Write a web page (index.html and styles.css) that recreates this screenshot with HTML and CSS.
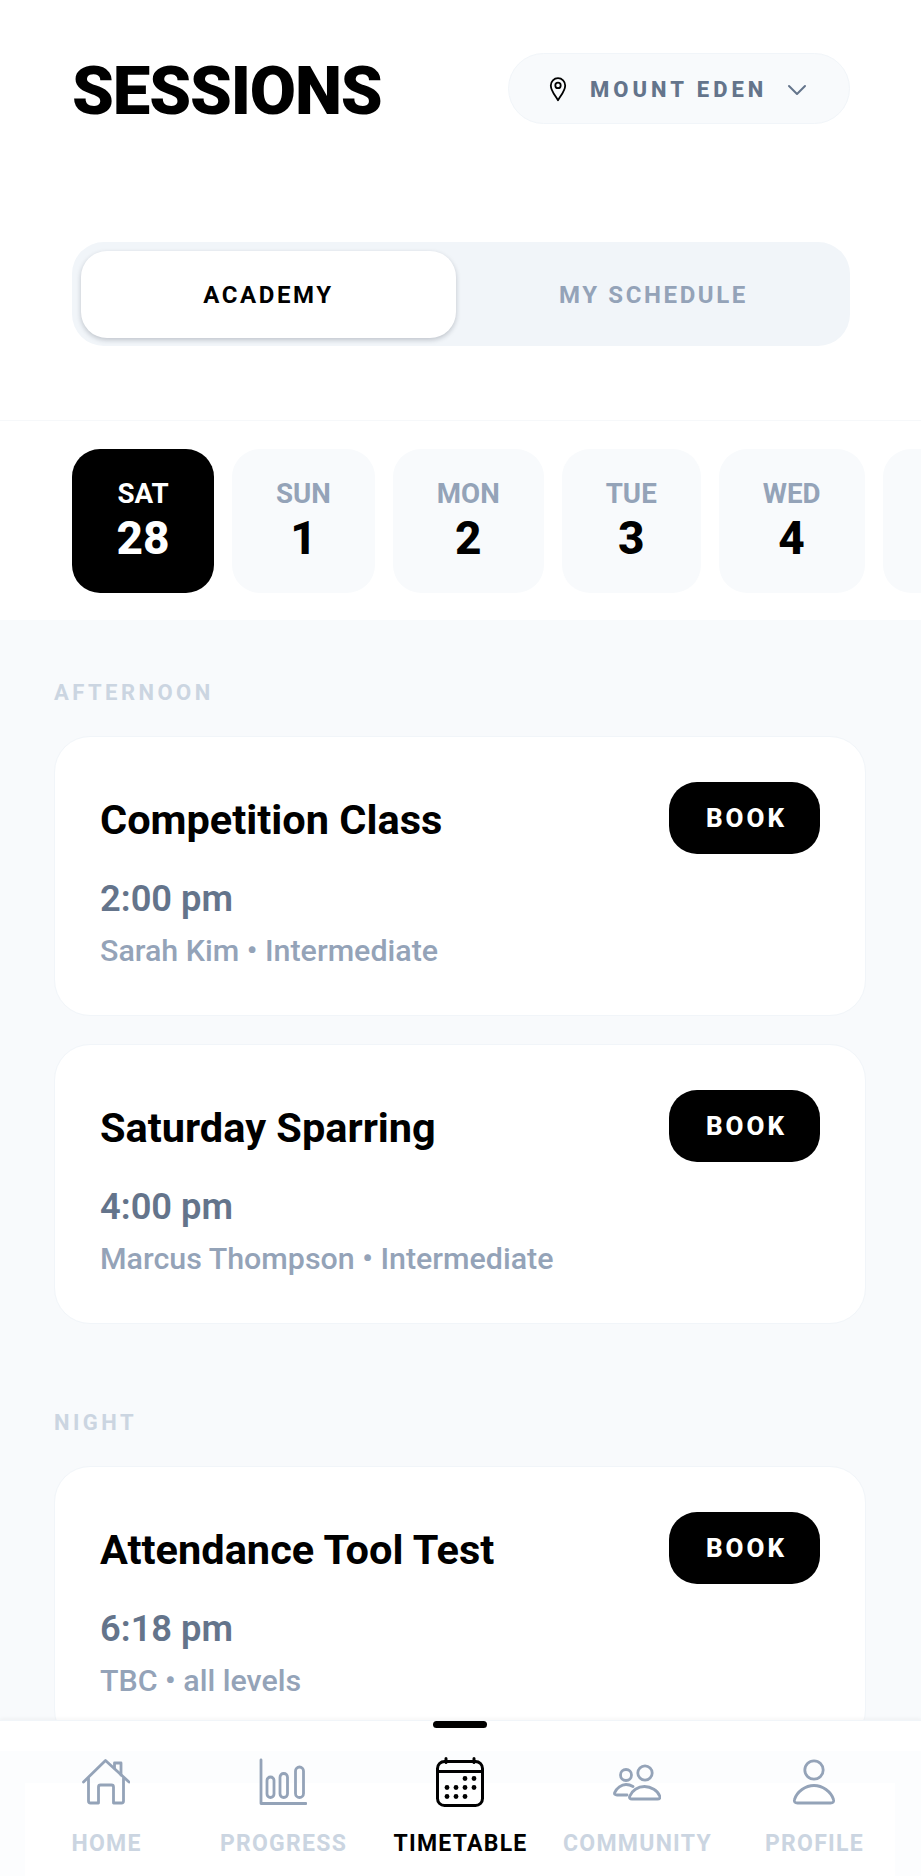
FILE: index.html
```html
<!DOCTYPE html>
<html lang="en">
<head>
<meta charset="utf-8">
<title>Sessions</title>
<link rel="stylesheet" href="styles.css">
</head>
<body>
<div class="app">
  <header class="header">
    <h1 class="title">SESSIONS</h1>
    <button class="location">
      <svg class="pin" viewBox="0 0 20 28" fill="none" stroke="#000" stroke-width="2"><path d="M10 26.500C6 20 2 15.500 2 10a8 8 0 0 1 16 0C18 15.500 14 20 10 26.500Z" stroke-linejoin="round"/><circle cx="10" cy="10" r="3"/></svg>
      <span>MOUNT EDEN</span>
      <svg class="chev" viewBox="0 0 20 12" fill="none" stroke="#64748b" stroke-width="2" stroke-linecap="round" stroke-linejoin="round"><path d="M2 2l8 8 8-8"/></svg>
    </button>
  </header>
  <div class="tabs-wrap">
    <div class="tabs">
      <div class="tab active">ACADEMY</div>
      <div class="tab">MY SCHEDULE</div>
    </div>
  </div>
  <div class="dates">
    <div class="date selected"><span class="dow">SAT</span><span class="num">28</span></div>
    <div class="date"><span class="dow">SUN</span><span class="num">1</span></div>
    <div class="date"><span class="dow">MON</span><span class="num">2</span></div>
    <div class="date"><span class="dow">TUE</span><span class="num">3</span></div>
    <div class="date"><span class="dow">WED</span><span class="num">4</span></div>
    <div class="date date-next"></div>
  </div>
  <main class="list">
    <section class="group">
      <h2 class="group-label">AFTERNOON</h2>
      <article class="card">
        <div class="card-top"><h3 class="card-title">Competition Class</h3><button class="book">BOOK</button></div>
        <p class="time">2:00 pm</p>
        <p class="meta">Sarah Kim • Intermediate</p>
      </article>
      <article class="card">
        <div class="card-top"><h3 class="card-title">Saturday Sparring</h3><button class="book">BOOK</button></div>
        <p class="time">4:00 pm</p>
        <p class="meta">Marcus Thompson • Intermediate</p>
      </article>
    </section>
    <section class="group">
      <h2 class="group-label">NIGHT</h2>
      <article class="card">
        <div class="card-top"><h3 class="card-title">Attendance Tool Test</h3><button class="book">BOOK</button></div>
        <p class="time">6:18 pm</p>
        <p class="meta">TBC • all levels</p>
      </article>
    </section>
  </main>
  <nav class="nav">
    <div class="nav-panel"></div>
    <div class="nav-handle"></div>
    <a class="nav-item">
      <svg class="nav-icon" viewBox="0 0 48 50" fill="none" stroke="#94a3b8" stroke-width="2.800" stroke-linejoin="round" stroke-linecap="round"><path d="M1.500 25 23.500 3.500 47 25"/><path d="M32.500 11V6H39v12"/><path d="M6.500 21.500V44a2 2 0 0 0 2 2h8V30a2 2 0 0 1 2-2h11a2 2 0 0 1 2 2v16h8a2 2 0 0 0 2-2V21.500"/></svg>
      <span>HOME</span>
    </a>
    <a class="nav-item">
      <svg class="nav-icon" viewBox="0 0 48 50" fill="none" stroke="#94a3b8" stroke-width="2.800" stroke-linejoin="round" stroke-linecap="round"><path d="M2 3v43.500h45"/><rect x="8" y="20" width="7" height="20.500" rx="3.500"/><rect x="21" y="16.500" width="7.500" height="24" rx="3.700"/><rect x="36.500" y="10" width="8" height="30.500" rx="4"/></svg>
      <span>PROGRESS</span>
    </a>
    <a class="nav-item current">
      <svg class="nav-icon" viewBox="0 0 48 50" fill="none" stroke="#000" stroke-width="3" stroke-linejoin="round" stroke-linecap="round"><rect x="1.500" y="4.500" width="45" height="44" rx="7"/><path d="M1.500 14.500h45M10 1.500v4M38 1.500v4"/><g fill="#000" stroke="none"><circle cx="29" cy="21.500" r="2.400"/><circle cx="38" cy="21.500" r="2.400"/><circle cx="11" cy="30.500" r="2.400"/><circle cx="20" cy="30.500" r="2.400"/><circle cx="29" cy="30.500" r="2.400"/><circle cx="38" cy="30.500" r="2.400"/><circle cx="11" cy="39.500" r="2.400"/><circle cx="20" cy="39.500" r="2.400"/><circle cx="29" cy="39.500" r="2.400"/></g></svg>
      <span>TIMETABLE</span>
    </a>
    <a class="nav-item">
      <svg class="nav-icon" viewBox="0 0 48 50" fill="none" stroke="#94a3b8" stroke-width="2.800" stroke-linejoin="round" stroke-linecap="round"><circle cx="13" cy="18" r="5.500"/><circle cx="32" cy="16" r="7.200"/><path d="M14 38H4c-2 0-3-1-2.200-2.500C3.500 31 8.500 27.500 13 27.500c2.500 0 5 .8 7 2"/><path d="M19 42c-2 0-3-1-2.300-2.800C18.800 33.500 25 29.500 31.500 29.500S44.800 33.500 46.800 39.200C47.500 41 46.500 42 44.500 42Z"/></svg>
      <span>COMMUNITY</span>
    </a>
    <a class="nav-item">
      <svg class="nav-icon" viewBox="0 0 48 50" fill="none" stroke="#94a3b8" stroke-width="2.800" stroke-linejoin="round" stroke-linecap="round"><circle cx="24" cy="13" r="9.200"/><path d="M7.500 46c-2.500 0-3.800-1.300-3-3.500C7 34.500 15.500 28.500 24 28.500S41 34.500 43.500 42.500c.8 2.200-.5 3.500-3 3.500Z"/></svg>
      <span>PROFILE</span>
    </a>
  </nav>
</div>
</body>
</html>
```

FILE: styles.css
```css
* { box-sizing: border-box; }
html, body { margin: 0; height: 100%; }
body { background: #fff; font-family: Roboto, "Liberation Sans", sans-serif; color: #000; }
h1, h2, h3, p { margin: 0; }

.app { width: 921px; height: 1876px; display: flex; flex-direction: column; overflow: hidden; }

.header { display: flex; justify-content: space-between; align-items: center; padding: 53px 71px 0 72px; height: 124px; flex: none; }
.title { font-size: 67px; font-weight: 900; line-height: 71px; letter-spacing: -1.150px; margin-top: 6px; }
.location { display: flex; align-items: center; width: 342px; height: 71px; padding: 2px 42px 0 40px; background: #f8fafc; border: 1px solid #f1f5f9; border-radius: 36px; font: 800 22px Roboto, sans-serif; letter-spacing: 4px; color: #64748b; }
.pin { width: 18px; height: 26px; flex: none; margin: -2px 23px 0 0; }
.location span { flex: 1; text-align: left; white-space: nowrap; }
.chev { width: 20px; height: 12px; flex: none; }

.tabs-wrap { flex: none; padding: 118px 71px 0 72px; height: 296px; }
.tabs { display: flex; height: 104px; padding: 9px 9px 8px; background: #f1f5f9; border-radius: 32px; }
.tab { flex: 1; display: flex; align-items: center; justify-content: center; padding-top: 1px; padding-left: 10px; border-radius: 26px; font-size: 24px; font-weight: 700; letter-spacing: 2.600px; color: #94a3b8; }
.tab.active { flex: none; width: 375px; padding-left: 0; background: #fff; color: #000; box-shadow: 0 2px 5px rgba(15, 23, 42, .22); }

.dates { flex: none; display: flex; gap: 18px; height: 200px; padding: 28px 0 0 72px; border-top: 1px solid #f6f8fa; overflow: hidden; }
.date { flex: none; height: 144px; padding: 30px 44px 0; display: flex; flex-direction: column; align-items: center; background: #f8fafc; border-radius: 28px; }
.date.selected { padding: 30px 0 0; width: 142px; background: #000; color: #fff; }
.date-next { width: 100px; }
.dow { font-size: 27.700px; line-height: 30px; font-weight: 700; color: #94a3b8; }
.selected .dow { color: #fff; }
.num { font-size: 46px; line-height: 50px; font-weight: 800; margin-top: 4px; }

.list { flex: 1; min-height: 0; overflow: hidden; padding: 62px 55px 0 54px; background: #f8fafc; }
.group { display: flex; flex-direction: column; gap: 28px; }
.group + .group { margin-top: 88px; }
.group-label { font-size: 22px; line-height: 22px; font-weight: 700; letter-spacing: 3.450px; color: #cbd5e1; margin-bottom: 4px; }
.card { height: 280px; padding: 45px 45px 0; background: #fff; border: 1px solid #f1f5f9; border-radius: 36px; }
.card-top { display: flex; justify-content: space-between; height: 72px; }
.card-title { font-size: 41.500px; line-height: 72px; font-weight: 700; color: #000; margin-top: 2px; }
.book { width: 151px; height: 72px; padding: 0 0 0 4px; background: #000; color: #fff; border: 0; border-radius: 28px; font: 800 26px Roboto, sans-serif; letter-spacing: 3px; }
.time { font-size: 36.300px; line-height: 40px; font-weight: 600; color: #64748b; margin-top: 25px; }
.meta { font-size: 30.400px; line-height: 34px; font-weight: 500; color: #94a3b8; margin-top: 15px; }

.nav { flex: none; position: relative; height: 156px; display: grid; grid-template-columns: repeat(5, 177px); padding: 36px 0 0 18px; background: linear-gradient(#fff 30px, #fcfdfe 30px); border-top: 1px solid #f1f5f9; box-shadow: 0 -2px 3px rgba(15, 23, 42, .03); }
.nav-panel { position: absolute; left: 25px; right: 26px; top: 62px; bottom: 0; background: #fff; }
.nav-handle { position: absolute; left: 433px; top: 0; width: 54px; height: 7px; border-radius: 4px; background: #000; }
.nav-item { position: relative; display: flex; flex-direction: column; align-items: center; gap: 23px; font-size: 23px; line-height: 28px; font-weight: 700; letter-spacing: 1.250px; color: #cbd5e1; white-space: nowrap; }
.nav-icon { width: 48px; height: 50px; flex: none; margin-left: -2px; }
.nav-item.current { color: #000; }
```
